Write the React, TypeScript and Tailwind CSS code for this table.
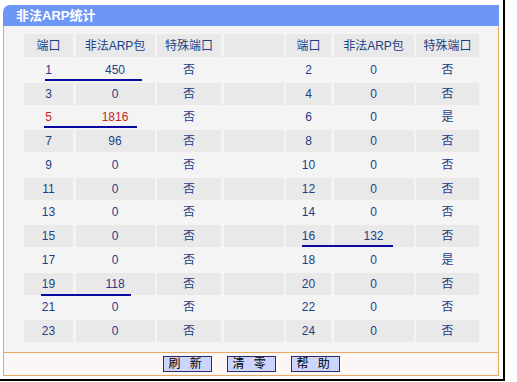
const ROWS: [number, number, string, number, number, string][] = [
  [1, 450, "否", 2, 0, "否"],
  [3, 0, "否", 4, 0, "否"],
  [5, 1816, "否", 6, 0, "是"],
  [7, 96, "否", 8, 0, "否"],
  [9, 0, "否", 10, 0, "否"],
  [11, 0, "否", 12, 0, "否"],
  [13, 0, "否", 14, 0, "否"],
  [15, 0, "否", 16, 132, "否"],
  [17, 0, "否", 18, 0, "是"],
  [19, 118, "否", 20, 0, "否"],
  [21, 0, "否", 22, 0, "否"],
  [23, 0, "否", 24, 0, "否"],
];

const FONT = { fontFamily: '"Liberation Sans", "Noto Sans CJK SC", sans-serif' };

export default function App() {
  return (
    <div className="w-[517px] h-[382px] bg-white" style={FONT}>
      <div className="w-[505px] h-[381px] border-r-2 border-b-2 border-black pl-[3px] pt-[5px]">
        <div className="w-[496px] h-[371px] flex flex-col">
          {/* Title bar */}
          <div className="h-[21px] bg-[#6e96f6] rounded-tl-[7px] flex items-center pl-[13px] text-white font-bold text-[13px]">
            非法ARP统计
          </div>

          {/* Body */}
          <div className="relative flex-1 bg-[#f4f4f4] border-x border-[#e8aa5c] pl-[20px] pt-[8px]">
            <div className="grid grid-cols-[49px_79px_64px_60px_45px_80px_63px] gap-x-[2.5px] gap-y-[2px] text-[12px] text-[#1d3f86]">
              {["端口", "非法ARP包", "特殊端口", "", "端口", "非法ARP包", "特殊端口"].map((h, i) => (
                <div key={i} className="h-[23px] bg-[#e9e9e9] flex items-center justify-center">
                  {h}
                </div>
              ))}
              {ROWS.map((r, ri) => {
                const gray = ri % 2 === 1;
                const cells = [r[0], r[1], r[2], "", r[3], r[4], r[5]];
                return cells.map((c, ci) => (
                  <div
                    key={`${ri}-${ci}`}
                    className={`h-[21.75px] flex items-center justify-center ${gray ? "bg-[#e9e9e9]" : ""} ${
                      ri === 2 && ci < 2 ? "text-[#cc2222]" : ""
                    }`}
                  >
                    {c}
                  </div>
                ));
              })}
            </div>

            {/* Annotation underlines */}
            <div className="absolute left-[41px] top-[53px] w-[97px] h-[2px] bg-[#0a0aa0]" />
            <div className="absolute left-[40px] top-[100px] w-[93px] h-[2px] bg-[#0a0aa0]" />
            <div className="absolute left-[298px] top-[219px] w-[91px] h-[2px] bg-[#0a0aa0]" />
            <div className="absolute left-[37px] top-[268px] w-[90px] h-[2px] bg-[#0a0aa0]" />
          </div>

          {/* Footer */}
          <div className="h-[24px] bg-[#fcf6f6] border border-[#e8aa5c] flex items-center justify-center gap-[15px] text-[12px] text-black">
            {["刷 新", "清 零", "帮 助"].map((b) => (
              <button
                key={b}
                className="w-[49px] h-[16px] bg-[#ccd5ff] border border-[#2e2e5e] flex items-center pl-[5px] leading-none tracking-[3px]"
              >
                {b}
              </button>
            ))}
          </div>
        </div>
      </div>
    </div>
  );
}
